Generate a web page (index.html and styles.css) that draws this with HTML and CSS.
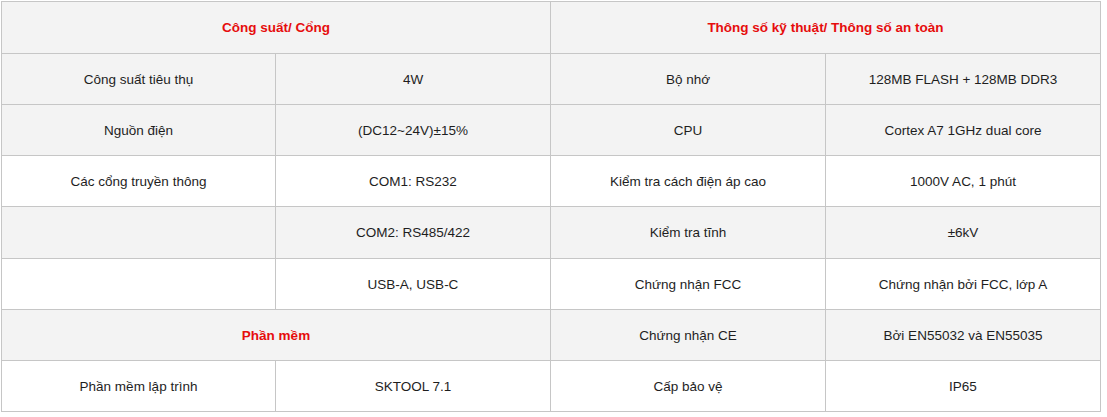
FILE: index.html
```html
<!DOCTYPE html>
<html lang="vi">
<head>
<meta charset="utf-8">
<title>Thông số</title>
<link rel="stylesheet" href="styles.css">
</head>
<body>
<table class="spec">
  <colgroup>
    <col class="c1">
    <col class="c2">
    <col class="c2">
    <col class="c2">
  </colgroup>
  <tr class="row gray tall">
    <td class="head" colspan="2">Công suất/ Cổng</td>
    <td class="head" colspan="2">Thông số kỹ thuật/ Thông số an toàn</td>
  </tr>
  <tr class="row gray">
    <td>Công suất tiêu thụ</td>
    <td>4W</td>
    <td>Bộ nhớ</td>
    <td>128MB FLASH + 128MB DDR3</td>
  </tr>
  <tr class="row gray">
    <td>Nguồn điện</td>
    <td>(DC12~24V)±15%</td>
    <td>CPU</td>
    <td>Cortex A7 1GHz dual core</td>
  </tr>
  <tr class="row">
    <td>Các cổng truyền thông</td>
    <td>COM1: RS232</td>
    <td>Kiểm tra cách điện áp cao</td>
    <td>1000V AC, 1 phút</td>
  </tr>
  <tr class="row gray tall">
    <td></td>
    <td>COM2: RS485/422</td>
    <td>Kiểm tra tĩnh</td>
    <td>±6kV</td>
  </tr>
  <tr class="row">
    <td></td>
    <td>USB-A, USB-C</td>
    <td>Chứng nhận FCC</td>
    <td>Chứng nhận bởi FCC, lớp A</td>
  </tr>
  <tr class="row gray">
    <td class="head" colspan="2">Phần mềm</td>
    <td>Chứng nhận CE</td>
    <td>Bởi EN55032 và EN55035</td>
  </tr>
  <tr class="row">
    <td>Phần mềm lập trình</td>
    <td>SKTOOL 7.1</td>
    <td>Cấp bảo vệ</td>
    <td>IP65</td>
  </tr>
</table>
</body>
</html>
```

FILE: styles.css
```css
html, body {
  margin: 0;
  padding: 0;
  background: #ffffff;
}

body {
  padding: 1px 0 0 1px;
  font-family: "Liberation Sans", Arial, sans-serif;
  font-size: 13.5px;
  color: #1e1e1e;
}

.spec {
  border-collapse: separate;
  border-spacing: 0;
  table-layout: fixed;
  width: 1100px;
  border-top: 1px solid #c6c6c6;
  border-left: 1px solid #c6c6c6;
  box-sizing: border-box;
}

.c1 {
  width: 274px;
}

.c2 {
  width: 275px;
}

.spec td {
  box-sizing: border-box;
  border-right: 1px solid #c6c6c6;
  border-bottom: 1px solid #c6c6c6;
  text-align: center;
  vertical-align: middle;
  padding: 0;
}

.row {
  height: 51px;
  background: #ffffff;
}

.row.tall {
  height: 52px;
}

.row.gray {
  background: #f3f3f3;
}

.spec .head {
  color: #e60d0d;
  font-weight: bold;
}
```
